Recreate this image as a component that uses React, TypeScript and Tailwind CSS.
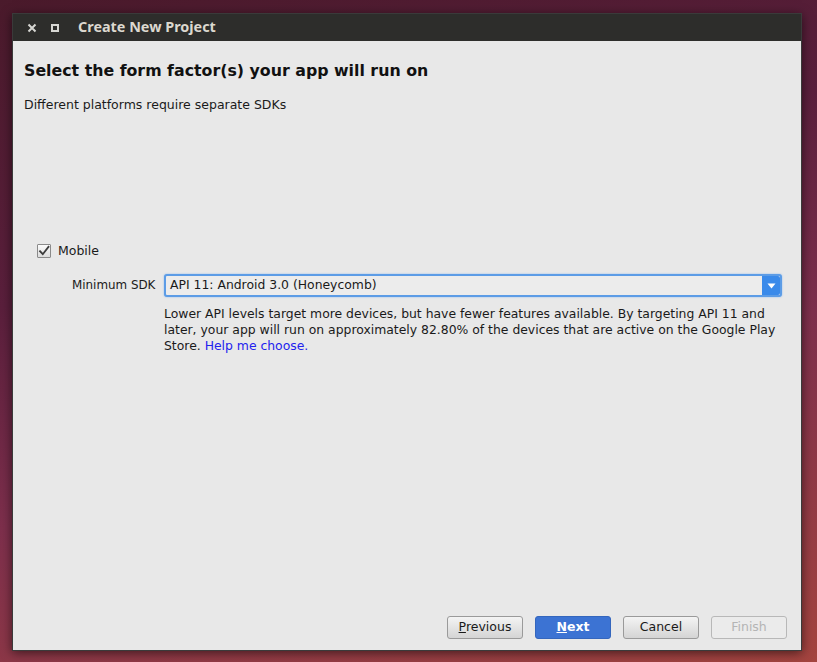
import React from "react";

function Check() {
  return (
    <div className="w-[14px] h-[14px] border border-[#8a8a8a] bg-[linear-gradient(to_bottom,#fbfbfb,#dcdcdc)] rounded-[1px] flex items-center justify-center">
      <svg width="12" height="12" viewBox="0 0 12 12">
        <path d="M2 6.2 L4.8 9.2 L10.5 1.8" fill="none" stroke="#3c3c3c" strokeWidth="1.8" strokeLinecap="square" />
      </svg>
    </div>
  );
}

function Btn({ children, kind }: { children: React.ReactNode; kind?: "primary" | "disabled" }) {
  const base = "w-[76px] h-[23px] flex items-center justify-center rounded-[3px] text-[12.5px]";
  if (kind === "primary")
    return <div className={base + " bg-[#3c73d3] border border-[#3466bd] text-white font-bold"}>{children}</div>;
  if (kind === "disabled")
    return <div className={base + " border border-[#b8b8b8] bg-[#ebebeb] text-[#b4b4b4]"}>{children}</div>;
  return (
    <div className={base + " border border-[#9a9a9a] bg-[linear-gradient(to_bottom,#f4f4f4,#d4d4d4)] text-[#1a1a1a]"}>{children}</div>
  );
}

export default function App() {
  return (
    <div
      className="w-[817px] h-[662px] overflow-hidden pt-[13px] pl-[12px] bg-[linear-gradient(165deg,#4a1a2b_0%,#5a1f3c_35%,#7d2f4c_60%,#a4443f_100%)]"
      style={{ fontFamily: '"DejaVu Sans", Verdana, sans-serif' }}
    >
      <div className="w-[790px] h-[638px] flex flex-col border border-[#3a3a3a] shadow-[0_2px_10px_rgba(0,0,0,0.55)]">
        <div className="h-[27px] bg-[#2d2d2b] flex items-center shrink-0">
          <svg width="10" height="10" viewBox="0 0 10 10" className="ml-[14px]">
            <path d="M1.5 1.5 L8.5 8.5 M8.5 1.5 L1.5 8.5" stroke="#d6d6d2" strokeWidth="2" />
          </svg>
          <div className="ml-[14px] w-[8px] h-[8px] border-2 border-[#d6d6d2]" />
          <div
            className="ml-[19px] text-[14.4px] font-bold text-[#dcd8cf] leading-none"
            style={{ fontFamily: '"Noto Sans", "Open Sans", sans-serif' }}
          >
            Create New Project
          </div>
        </div>
        <div className="flex-1 bg-[#e8e8e8] flex flex-col pl-[11px] pr-[14px] pb-[11px]">
          <div className="mt-[20px] text-[15.8px] leading-[20px] font-bold text-[#111]">Select the form factor(s) your app will run on</div>
          <div className="mt-[16px] text-[12.5px] leading-[16px] text-[#1a1a1a]">Different platforms require separate SDKs</div>
          <div className="mt-[130px] ml-[13px] h-[16px] flex items-center gap-[7px]">
            <Check />
            <span className="text-[12.5px] text-[#1a1a1a]">Mobile</span>
          </div>
          <div className="mt-[15px] flex items-center">
            <div className="ml-[48px] w-[92px] text-[11.9px] text-[#1a1a1a]">Minimum SDK</div>
            <div className="w-[618px] h-[23px] flex rounded-[3px] border-2 border-[#5c9ce6] shadow-[0_0_2px_#8ab8ee] bg-[#ececec]">
              <div className="flex-1 flex items-center pl-[4px] text-[12.4px] text-[#1a1a1a]">API 11: Android 3.0 (Honeycomb)</div>
              <div className="w-[18px] bg-[#3a8aea] flex items-center justify-center rounded-r-[2px]">
                <svg width="9" height="6" viewBox="0 0 9 6"><path d="M0.5 0.5 H8.5 L4.5 5.5 Z" fill="#fff" /></svg>
              </div>
            </div>
          </div>
          <div className="mt-[9px] ml-[140px] w-[620px] text-[12.4px] leading-[16px] text-[#1a1a1a]">
            <p>Lower API levels target more devices, but have fewer features available. By targeting API 11 and later, your app will run on approximately 82.80% of the devices that are active on the Google Play Store. <a className="text-[#2222ee]">Help me choose.</a></p>
          </div>
          <div className="mt-auto flex justify-end gap-[12px]">
            <Btn><span><span className="underline">P</span>revious</span></Btn>
            <Btn kind="primary"><span><span className="underline">N</span>ext</span></Btn>
            <Btn>Cancel</Btn>
            <Btn kind="disabled">Finish</Btn>
          </div>
        </div>
      </div>
    </div>
  );
}
